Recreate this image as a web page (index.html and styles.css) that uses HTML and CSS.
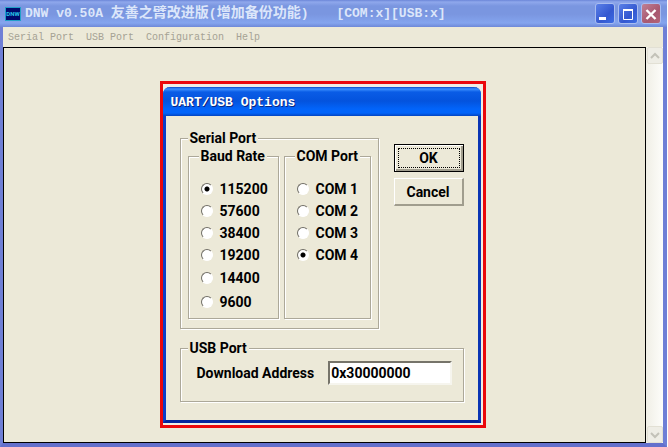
FILE: index.html
```html
<!DOCTYPE html>
<html lang="zh-CN">
<head>
  <meta charset="UTF-8">
  <meta name="viewport" content="width=device-width, initial-scale=1.0">
  <title>DNW v0.50A</title>
  <link rel="stylesheet" href="styles.css">
</head>
<body>

  <div class="window">
    <header class="titlebar">
      <span class="app-icon">DNW</span>
      <h1 class="window-title">DNW v0.50A <span class="cjk">友善之臂改进版</span>(<span class="cjk">增加备份功能</span>)<span class="status">[COM:x][USB:x]</span></h1>
      <div class="window-buttons">
        <button type="button" class="win-btn" aria-label="Minimize">
          <svg viewBox="0 0 18 18"><rect x="3" y="12" width="7" height="3" fill="#fff"/></svg>
        </button>
        <button type="button" class="win-btn" aria-label="Maximize">
          <svg viewBox="0 0 18 18"><path d="M4.500 4.500h9v10h-9z" fill="none" stroke="#fff"/><path d="M4 5h10" stroke="#fff" stroke-width="2"/></svg>
        </button>
        <button type="button" class="win-btn close" aria-label="Close">
          <svg viewBox="0 0 18 18"><path d="M4.500 5l9 9M13.500 5l-9 9" stroke="#fff" stroke-width="2.400"/></svg>
        </button>
      </div>
    </header>

    <nav class="menubar">
      <a href="#">Serial Port</a>
      <a href="#">USB Port</a>
      <a href="#">Configuration</a>
      <a href="#">Help</a>
    </nav>

    <div class="content">
      <main class="client">
        <div class="highlight">
          <form class="dialog">
            <h2 class="dialog-title">UART/USB Options</h2>
            <div class="dialog-body">
              <fieldset class="group serial">
                <legend>Serial Port</legend>
                <div class="serial-columns">
                  <fieldset class="group options">
                    <legend>Baud Rate</legend>
                    <label class="option"><input type="radio" name="baud" checked>115200</label>
                    <label class="option"><input type="radio" name="baud">57600</label>
                    <label class="option"><input type="radio" name="baud">38400</label>
                    <label class="option"><input type="radio" name="baud">19200</label>
                    <label class="option tall"><input type="radio" name="baud">14400</label>
                    <label class="option tall"><input type="radio" name="baud">9600</label>
                  </fieldset>
                  <fieldset class="group options">
                    <legend>COM Port</legend>
                    <label class="option"><input type="radio" name="com">COM 1</label>
                    <label class="option"><input type="radio" name="com">COM 2</label>
                    <label class="option"><input type="radio" name="com">COM 3</label>
                    <label class="option"><input type="radio" name="com" checked>COM 4</label>
                  </fieldset>
                </div>
              </fieldset>

              <div class="actions">
                <button type="button" class="btn default"><span>OK</span></button>
                <button type="button" class="btn">Cancel</button>
              </div>

              <fieldset class="group usb">
                <legend>USB Port</legend>
                <div class="field">
                  <label for="address">Download Address</label>
                  <input type="text" id="address" value="0x30000000">
                </div>
              </fieldset>
            </div>
          </form>
        </div>
      </main>

      <div class="scrollbar">
        <button type="button" class="scroll-btn" aria-label="Scroll up">
          <svg viewBox="0 0 14 14"><path d="M3 9l4-4 4 4" fill="none" stroke="#c3c2b8" stroke-width="2"/></svg>
        </button>
        <button type="button" class="scroll-btn" aria-label="Scroll down">
          <svg viewBox="0 0 14 14"><path d="M3 5l4 4 4-4" fill="none" stroke="#c3c2b8" stroke-width="2"/></svg>
        </button>
      </div>
    </div>
  </div>

</body>
</html>
```

FILE: styles.css
```css
* {
  box-sizing: border-box;
}

body {
  margin: 0;
  padding-right: 1px;
  background: #fff;
  font-family: Roboto, Arial, sans-serif;
}

/* main window */
.window {
  display: flex;
  flex-direction: column;
  min-height: 100vh;
  border: solid #6f7fd6;
  border-width: 0 4px 4px 3px;
  border-bottom-color: #6470cc;
  background: #ece9d8;
}

.titlebar {
  display: flex;
  align-items: center;
  height: 27px;
  margin: 0 -4px 0 -3px;
  padding: 0 6px 0 5px;
  background: linear-gradient(#6c86d8 0, #8fa8ec 2px, #7a96e0 6px, #7a96e0 14px, #84a4ee 23px, #6e88d8 27px);
  color: #dce6fa;
}

.app-icon {
  width: 16px;
  height: 14px;
  border: 1px solid #20a0c8;
  background: #000a6c;
  color: #28c8e8;
  font-size: 6px;
  font-weight: bold;
  line-height: 12px;
  text-align: center;
}

.window-title {
  flex: 1;
  margin: 0 0 0 4px;
  font: bold 13px/20px "Liberation Mono", "Noto Sans CJK SC", monospace;
  white-space: nowrap;
}

.cjk {
  font-size: 14px;
}

.status {
  margin-left: 28px;
}

.window-buttons {
  display: flex;
  gap: 3px;
}

.win-btn {
  width: 20px;
  height: 21px;
  padding: 0;
  border: 1px solid #a8bcf0;
  border-radius: 3px;
  background: linear-gradient(135deg, #5a80e8, #3458d0 60%, #3c6ce4);
}

.win-btn svg {
  display: block;
  width: 18px;
  height: 18px;
}

.win-btn.close {
  background: linear-gradient(135deg, #c08094, #a85870 60%, #b46478);
}

.menubar {
  display: flex;
  gap: 12px;
  height: 20px;
  padding: 0 5px;
  font: 10px/22px "Liberation Mono", monospace;
}

.menubar a {
  color: #a5a294;
  text-decoration: none;
}

.content {
  display: flex;
  flex: 1;
}

.client {
  flex: 1;
  padding: 33px 4px 0 0;
  border: 1px solid #000;
}

.scrollbar {
  display: flex;
  flex-direction: column;
  justify-content: space-between;
  width: 17px;
  padding-left: 1px;
  background: linear-gradient(90deg, #f0efe6, #fdfdfa);
}

.scroll-btn {
  width: 16px;
  height: 17px;
  padding: 0;
  border: 1px solid #e2e0d4;
  border-radius: 2px;
  background: #eeede5;
}

.scroll-btn svg {
  display: block;
  width: 14px;
  height: 14px;
}

/* dialog */
.highlight {
  width: 326px;
  max-width: 100%;
  margin: 0 auto;
  padding: 3px 2px 2px 0;
  border: 3px solid #ea080c;
  background: #f0eee6;
}

.dialog {
  border: solid #0c3fc8;
  border-width: 0 3px 3px;
  border-right-color: #0a34b4;
  border-bottom-color: #04249c;
  border-radius: 7px 7px 0 0;
  background: #ece9d8;
  color: #000;
  font-size: 14px;
  font-weight: bold;
  line-height: 16px;
}

.dialog-title {
  margin: 0 -3px;
  padding: 2px 8px 0;
  border-radius: 7px 7px 0 0;
  background: linear-gradient(#0a48c4 0, #3c90ff 2px, #0a5ce6 5px, #0453dd 14px, #0264fa 22px, #0264fa 26px, #0344c0 29px);
  color: #fff;
  font: bold 13px/27px "Liberation Mono", monospace;
  text-shadow: 1px 1px #0a2880;
}

.dialog-body {
  display: grid;
  grid-template-columns: 1fr 70px;
  gap: 11px 15px;
  padding: 14px 14px 18px;
}

/* etched group boxes */
.group {
  min-width: 0;
  margin: 0;
  padding: 0 7px;
  border: 1px solid #aca899;
  box-shadow: 1px 1px #fff, inset 1px 1px #fff;
}

.group legend {
  padding: 0 2px;
  background: #ece9d8;
}

.serial {
  padding-top: 2px;
  padding-bottom: 9px;
}

.serial-columns {
  display: grid;
  grid-template-columns: 91fr 87fr;
  gap: 5px;
}

.options {
  padding: 14px 0 4px 10px;
}

.options legend {
  white-space: nowrap;
}

.option {
  display: flex;
  align-items: center;
  height: 22px;
}

.option.tall {
  height: 24px;
}

.option input {
  appearance: none;
  width: 12px;
  height: 12px;
  margin: 0 7px 0 2px;
  border: 1px solid;
  border-color: #706e66 #fff #fff #706e66;
  border-radius: 50%;
  background: #fff;
}

.option input:checked {
  background: radial-gradient(circle, #000 2px, #fff 3px);
}

.actions {
  display: flex;
  flex-direction: column;
  gap: 6px;
  padding-top: 14px;
}

.btn {
  height: 28px;
  padding: 0;
  border: solid;
  border-width: 1px 2px 2px 1px;
  border-color: #fff #a09d8e #a09d8e #fff;
  background: #ece9d8;
  color: #000;
  font: inherit;
}

.btn.default {
  padding: 2px;
  border: 1px solid #000;
  box-shadow: inset 1px 1px #fff, inset -2px -2px #a09d8e;
}

.btn.default span {
  display: block;
  height: 20px;
  margin: 0 1px;
  border: 1px dotted #000;
  line-height: 18px;
}

.usb {
  grid-column: 1 / -1;
  padding: 5px 11px 16px 7px;
}

.field {
  display: flex;
  align-items: center;
  gap: 14px;
  padding-left: 9px;
}

.field label {
  white-space: nowrap;
}

.field input {
  flex: 1;
  min-width: 0;
  height: 24px;
  padding: 0 1px;
  border: 2px solid;
  border-color: #76746a #f6f5ee #f6f5ee #76746a;
  background: #fff;
  color: #000;
  font: inherit;
}
```
